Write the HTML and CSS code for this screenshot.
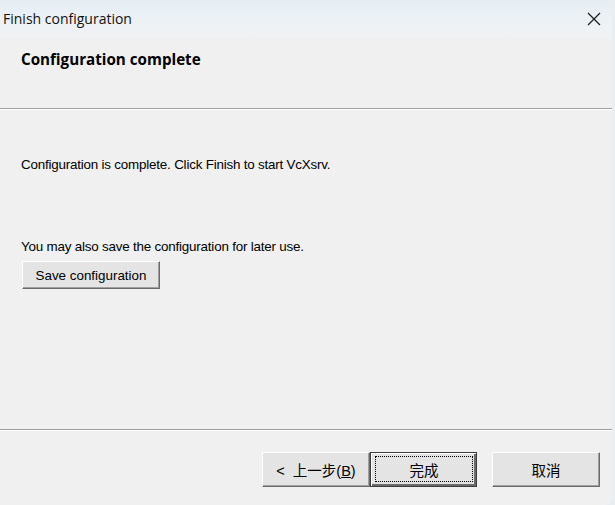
FILE: index.html
```html
<!DOCTYPE html>
<html lang="en">
<head>
    <meta charset="UTF-8">
    <meta name="viewport" content="width=device-width, initial-scale=1.0">
    <title>Finish configuration</title>
    <link rel="stylesheet" href="styles.css">
</head>
<body>
    <div class="window">
        <div class="titlebar">
            <span class="title">Finish configuration</span>
            <svg class="close" width="14" height="14" viewBox="0 0 14 14">
                <path d="M1 1 L13 13 M13 1 L1 13" stroke="#1a1a1a" stroke-width="1.2" fill="none"/>
            </svg>
        </div>

        <div class="header">
            <h1>Configuration complete</h1>
        </div>

        <div class="content">
            <p class="msg">Configuration is complete. Click Finish to start VcXsrv.</p>
            <p class="msg save-msg">You may also save the configuration for later use.</p>
            <button class="btn save-btn">Save configuration</button>
        </div>

        <div class="footer">
            <button class="btn back-btn">&lt;&nbsp; 上一步(<u>B</u>)</button>
            <button class="btn finish-btn"><span class="focus">完成</span></button>
            <button class="btn cancel-btn">取消</button>
        </div>
    </div>
</body>
</html>
```

FILE: styles.css
```css
* {
    box-sizing: border-box;
}

html, body {
    margin: 0;
    padding: 0;
    background-color: #e9eef2;
}

.window {
    width: 612px;
    height: 505px;
    background-color: #f0f0f0;
    border-top-right-radius: 8px;
    border-bottom-right-radius: 8px;
    display: flex;
    flex-direction: column;
    font-family: "Liberation Sans", Arial, "Noto Sans CJK SC", sans-serif;
    color: #000;
}

.titlebar {
    height: 38px;
    flex: none;
    display: flex;
    align-items: center;
    justify-content: space-between;
    padding: 0 11px 0 3px;
    background: linear-gradient(to bottom, #e6eef4, #eef2f5 70%, #f0f1f2);
    border-top-right-radius: 8px;
}

.title {
    font-family: "Open Sans", "Noto Sans", sans-serif;
    font-size: 14px;
    color: #111;
    margin-top: -1px;
}

.close {
    margin-top: -1px;
}

.header {
    height: 71px;
    flex: none;
    border-bottom: 1px solid #a0a0a0;
    box-shadow: 0 1px 0 #ffffff;
    padding-left: 21px;
}

.header h1 {
    margin: 11px 0 0;
    font-family: "Open Sans", "Noto Sans", sans-serif;
    font-size: 15.2px;
    font-weight: bold;
}

.content {
    flex: 1;
    padding: 48px 0 0 21px;
    border-bottom: 1px solid #a0a0a0;
    box-shadow: 0 1px 0 #ffffff;
}

.msg {
    margin: 0;
    font-size: 13.4px;
    letter-spacing: -0.2px;
    line-height: 16px;
}

.save-msg {
    margin-top: 66px;
}

.btn {
    font-family: "Liberation Sans", Arial, "Noto Sans CJK SC", sans-serif;
    font-size: 13.4px;
    color: #000;
    background-color: #e4e4e4;
    border: 1px solid;
    border-color: #ffffff #6b6b6b #6b6b6b #ffffff;
    box-shadow: inset -1px -1px 0 #a0a0a0;
    padding: 0;
    height: 28px;
}

.save-btn {
    margin: 6px 0 0 1px;
    width: 138px;
    font-size: 13.4px;
}

.footer {
    height: 75px;
    flex: none;
    display: flex;
    align-items: flex-start;
    padding: 22px 0 0 262px;
}

.back-btn,
.cancel-btn {
    width: 108px;
    height: 35px;
    font-size: 14.5px;
}

.finish-btn {
    width: 107px;
    height: 35px;
    font-size: 14.5px;
    border: 1px solid #3c3c3c;
    box-shadow: inset 1px 1px 0 #ffffff, inset -2px -2px 0 #6b6b6b;
    display: flex;
    padding: 3px 3px 4px 4px;
}

.focus {
    flex: 1;
    display: flex;
    align-items: center;
    justify-content: center;
    border: 1px dotted #000;
}

.cancel-btn {
    margin-left: 15px;
}
```
